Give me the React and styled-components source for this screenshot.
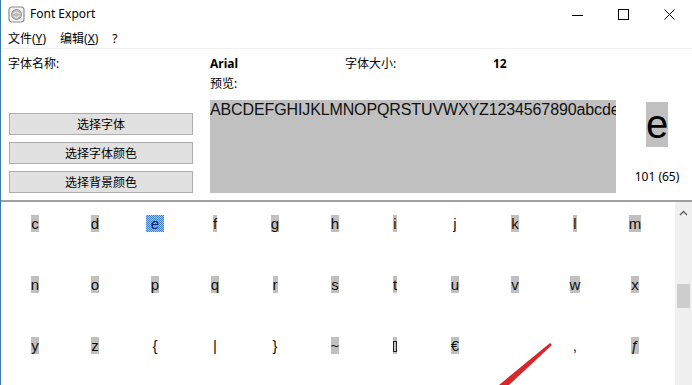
import React from "react";
import styled, { createGlobalStyle } from "styled-components";

const GlobalStyle = createGlobalStyle`
  html, body {
    margin: 0;
    padding: 0;
    background: #fff;
    overflow: hidden;
  }
  body {
    font-family: "Noto Sans", "Noto Sans CJK SC", sans-serif;
  }
`

const Window = styled.div`
    position: relative;
    width: 692px;
    height: 385px;
    box-sizing: border-box;
    border-left: 1px solid #3a78a6;
    background: #fff;
    display: flex;
    flex-direction: column;
    overflow: hidden;
    font-size: 12px;
    color: #000;
`

const TitleBar = styled.div`
    height: 28px;
    flex-shrink: 0;
    display: flex;
    align-items: center;
`

const AppIcon = styled.svg`
    margin-left: 7px;
    flex-shrink: 0;
`

const Title = styled.span`
    flex: 1;
    margin-left: 5px;
    line-height: 16px;
    font-size: 12px;
`

const CaptionButton = styled.div`
    width: 46px;
    height: 28px;
    display: flex;
    align-items: center;
    justify-content: center;
`

const MenuBar = styled.div`
    height: 20px;
    flex-shrink: 0;
    display: flex;
    align-items: center;
    border-bottom: 1px solid #f0f0f0;
`

const MenuItem = styled.span`
    padding: 0 7px;
    line-height: 17px;
`

const TopPanel = styled.div`
    height: 151px;
    box-sizing: border-box;
    flex-shrink: 0;
    display: flex;
    padding: 6px 0 7px 7px;
`

const LeftCol = styled.div`
    width: 186px;
    display: flex;
    flex-direction: column;
`

const FieldLabel = styled.span`
    display: inline-block;
    line-height: 17px;
    width: ${p => p.$width || "auto"};
    font-weight: ${p => (p.$bold ? 700 : 400)};
`

const ButtonStack = styled.div`
    margin-top: auto;
    margin-left: 1px;
    display: flex;
    flex-direction: column;
    gap: 7px;
`

const Button = styled.div`
    height: 22px;
    width: 184px;
    box-sizing: border-box;
    background: #e1e1e1;
    border: 1px solid #adadad;
    display: flex;
    align-items: center;
    justify-content: center;
    font-size: 12px;
`

const MiddleCol = styled.div`
    margin-left: 16px;
    width: 406px;
    display: flex;
    flex-direction: column;
`

const InfoRow = styled.div`
    display: flex;
    height: 17px;
`

const PreviewLabel = styled.div`
    margin-top: 3px;
    line-height: 17px;
`

const PreviewBox = styled.div`
    margin-top: 8px;
    height: 94px;
    background: #c0c0c0;
    overflow: hidden;
    white-space: nowrap;
    font-family: "Liberation Sans", Arial, sans-serif;
    font-size: 16px;
    line-height: 20px;
    letter-spacing: -0.12px;
    color: #111;
`

const RightCol = styled.div`
    flex: 1;
    padding-left: 6px;
    display: flex;
    flex-direction: column;
    align-items: center;
`

const BigGlyph = styled.div`
    margin-top: 47px;
    background: #c0c0c0;
    font-family: "Liberation Sans", Arial, sans-serif;
    font-size: 40px;
    line-height: 45px;
    color: #000;
`

const CodeText = styled.div`
    margin-top: 21px;
    line-height: 17px;
`

const GridArea = styled.div`
    flex: 1;
    min-height: 0;
    display: flex;
    border-top: 2px solid #a0a0a0;
`

const CharGrid = styled.div`
    flex: 1;
    display: grid;
    grid-template-columns: repeat(11, 60px);
    grid-auto-rows: 61px;
    padding: 13px 0 0 4px;
    justify-items: center;
    align-items: start;
    font-family: "Liberation Sans", Arial, sans-serif;
    font-size: 15px;
`

const Glyph = styled.span`
    display: inline-block;
    height: 17px;
    line-height: 17px;
    color: #111;
    background: ${p => (p.$bg ? "#c0c0c0" : "transparent")};
`

const SelectedGlyph = styled.span`
    display: inline-block;
    height: 17px;
    line-height: 17px;
    padding: 0 4.5px;
    color: #10246e;
    background: repeating-conic-gradient(#3f7fd6 0 25%, #a9c6ee 0 50%) 0 0 / 2px 2px;
`

const MissingBox = styled.span`
    display: inline-block;
    width: 4px;
    height: 17px;
    background: #c0c0c0;
    position: relative;
    &::after {
        content: "";
        position: absolute;
        left: 0;
        top: 4px;
        width: 2px;
        height: 9px;
        border: 1px solid #222;
    }
`

const Scrollbar = styled.div`
    width: 17px;
    background: #f0f0f0;
    display: flex;
    flex-direction: column;
    align-items: center;
`

const ScrollArrow = styled.div`
    height: 22px;
    display: flex;
    align-items: center;
    justify-content: center;
`

const ScrollThumb = styled.div`
    margin-top: 60px;
    width: 13px;
    height: 24px;
    background: #cdcdcd;
`

const Annotation = styled.svg`
    position: absolute;
    left: 0;
    top: 0;
    pointer-events: none;
`

const rows = [
    [["c", 1], ["d", 1], ["e", 1, "sel"], ["f", 1], ["g", 1], ["h", 1], ["i", 1], ["j", 0], ["k", 1], ["l", 1], ["m", 1]],
    [["n", 1], ["o", 1], ["p", 1], ["q", 1], ["r", 1], ["s", 1], ["t", 1], ["u", 1], ["v", 1], ["w", 1], ["x", 1]],
    [["y", 1], ["z", 1], ["{", 0], ["|", 0], ["}", 0], ["~", 1], ["", 1, "box"], ["€", 1], ["", 0], ["‚", 0], ["ƒ", 1]],
]

const renderCell = ([ch, bg, kind], i) => {
    if (kind === "sel") return <div key={i}><SelectedGlyph>{ch}</SelectedGlyph></div>
    if (kind === "box") return <div key={i}><MissingBox /></div>
    return <div key={i}><Glyph $bg={bg === 1}>{ch}</Glyph></div>
}

const App = () => {
    return (
        <Window>
            <GlobalStyle />
            <TitleBar>
                <AppIcon width="17" height="17" viewBox="0 0 17 17">
                    <rect x="1" y="1" width="15" height="15" rx="3" fill="#f4f4f4" stroke="#8c8c8c" strokeWidth="1.2" />
                    <circle cx="8.5" cy="8.5" r="5" fill="#bdbdbd" stroke="#8a8a8a" strokeWidth="0.8" />
                    <path d="M5.5 7.5 Q8.5 4.5 11.5 7.5 M6 10.5 Q9 13 11.5 9.5" fill="none" stroke="#f0f0f0" strokeWidth="1" />
                </AppIcon>
                <Title>Font Export</Title>
                <CaptionButton>
                    <svg width="11" height="11" viewBox="0 0 11 11"><path d="M0 6.5 H11" stroke="#000" strokeWidth="1" /></svg>
                </CaptionButton>
                <CaptionButton>
                    <svg width="11" height="11" viewBox="0 0 11 11"><rect x="0.5" y="0.5" width="10" height="10" fill="none" stroke="#000" strokeWidth="1" /></svg>
                </CaptionButton>
                <CaptionButton>
                    <svg width="11" height="11" viewBox="0 0 11 11"><path d="M0.5 0.5 L10.5 10.5 M10.5 0.5 L0.5 10.5" stroke="#000" strokeWidth="1" /></svg>
                </CaptionButton>
            </TitleBar>
            <MenuBar>
                <MenuItem>文件(<u>Y</u>)</MenuItem>
                <MenuItem>编辑(<u>X</u>)</MenuItem>
                <MenuItem>?</MenuItem>
            </MenuBar>
            <TopPanel>
                <LeftCol>
                    <FieldLabel>字体名称:</FieldLabel>
                    <ButtonStack>
                        <Button>选择字体</Button>
                        <Button>选择字体颜色</Button>
                        <Button>选择背景颜色</Button>
                    </ButtonStack>
                </LeftCol>
                <MiddleCol>
                    <InfoRow>
                        <FieldLabel $bold $width="135px">Arial</FieldLabel>
                        <FieldLabel $width="148px">字体大小:</FieldLabel>
                        <FieldLabel $bold>12</FieldLabel>
                    </InfoRow>
                    <PreviewLabel>预览:</PreviewLabel>
                    <PreviewBox>ABCDEFGHIJKLMNOPQRSTUVWXYZ1234567890abcdefghijklmnopqrstuvwxyz</PreviewBox>
                </MiddleCol>
                <RightCol>
                    <BigGlyph>e</BigGlyph>
                    <CodeText>101 (65)</CodeText>
                </RightCol>
            </TopPanel>
            <GridArea>
                <CharGrid>
                    {rows.map(row => row.map(renderCell))}
                </CharGrid>
                <Scrollbar>
                    <ScrollArrow>
                        <svg width="9" height="6" viewBox="0 0 9 6"><path d="M1 5 L4.5 1.5 L8 5" fill="none" stroke="#606060" strokeWidth="1.4" /></svg>
                    </ScrollArrow>
                    <ScrollThumb />
                </Scrollbar>
            </GridArea>
            <Annotation width="692" height="385" viewBox="0 0 692 385">
                <polygon points="549,343 551,345 508,385 498,385" fill="#d9262d" />
            </Annotation>
        </Window>
    )
}

export default App;
